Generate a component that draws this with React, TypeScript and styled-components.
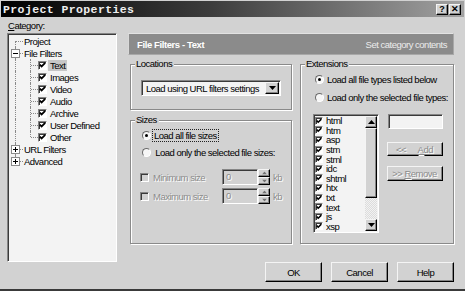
import styled, { createGlobalStyle, css } from 'styled-components';

const BG = '#d2d2d2';
const FIELD = '#f3f3f3';

const GlobalStyle = createGlobalStyle`
  html, body {
    margin: 0;
    padding: 0;
    background: ${BG};
  }
  body {
    width: 465px;
    height: 291px;
    overflow: hidden;
    font-family: "Liberation Sans", Arial, sans-serif;
    font-size: 9.5px;
    letter-spacing: -0.5px;
    color: #000;
  }
`;

const raised = css`
  box-sizing: border-box;
  border: 1px solid;
  border-color: #f4f4f4 #000 #000 #f4f4f4;
  box-shadow: inset -1px -1px #858585;
  background: ${BG};
`;

const sunken = css`
  box-sizing: border-box;
  border: 1px solid;
  border-color: #858585 #fff #fff #858585;
  box-shadow: inset 1px 1px #3a3a3a;
`;

const disabledText = css`
  color: #8c8c8c;
  text-shadow: 1px 1px #fff;
`;

const Window = styled.div`
  box-sizing: border-box;
  width: 465px;
  height: 291px;
  padding: 1px 1px 0 1px;
  background: ${BG};
  display: flex;
  flex-direction: column;
  box-shadow: inset 0 -2px #3a3a3a;
`;

const TitleBar = styled.div`
  height: 16px;
  flex-shrink: 0;
  display: flex;
  align-items: center;
  justify-content: space-between;
  padding: 0 3px 0 2px;
  background: linear-gradient(to right, #000 0%, #3c3c3c 45%, #a2a2a2 100%);
`;

const TitleText = styled.span`
  font-family: "Liberation Mono", "DejaVu Sans Mono", monospace;
  font-weight: bold;
  font-size: 11.5px;
  letter-spacing: 0.4px;
  color: #eeeeee;
`;

const TitleButtons = styled.div`
  display: flex;
  gap: 1px;
`;

const TitleButton = styled.span`
  ${raised};
  width: 12px;
  height: 11px;
  display: flex;
  align-items: center;
  justify-content: center;
  font-weight: bold;
  font-size: 9px;
  letter-spacing: 0;
  line-height: 9px;
`;

const Main = styled.div`
  flex: 1;
  display: flex;
  padding: 3px 10px 0 6px;
`;

const LeftCol = styled.div`
  width: 110px;
  display: flex;
  flex-direction: column;
`;

const CategoryLabel = styled.div`
  height: 13px;
  line-height: 12px;
  padding-left: 1px;
  u {
    text-decoration: underline;
  }
`;

const Tree = styled.div`
  ${sunken};
  height: 229px;
  background: ${FIELD};
  padding-top: 1px;
`;

const TreeRow = styled.div`
  height: 12px;
  display: flex;
  align-items: center;
`;

type Vert = 'full' | 'top' | 'bottom' | 'none';

const Guide = styled.span<{ $v: Vert; $h?: boolean }>`
  position: relative;
  flex-shrink: 0;
  width: 15px;
  height: 12px;
  display: flex;
  align-items: center;
  padding-left: 3px;
  box-sizing: border-box;
  &::before {
    content: '';
    display: ${(p) => (p.$v === 'none' ? 'none' : 'block')};
    position: absolute;
    left: 7px;
    top: ${(p) => (p.$v === 'bottom' ? '6px' : '0')};
    bottom: ${(p) => (p.$v === 'top' ? '6px' : '0')};
    border-left: 1px dotted #8a8a8a;
  }
  &::after {
    content: '';
    display: ${(p) => (p.$h ? 'block' : 'none')};
    position: absolute;
    left: 8px;
    top: 6px;
    width: 7px;
    border-top: 1px dotted #8a8a8a;
  }
`;

const Expander = styled.span<{ $plus?: boolean }>`
  position: relative;
  z-index: 1;
  box-sizing: border-box;
  width: 9px;
  height: 9px;
  border: 1px solid #8a8a8a;
  background: #fff;
  &::before {
    content: '';
    position: absolute;
    left: 1px;
    top: 3px;
    width: 5px;
    height: 1px;
    background: #000;
  }
  &::after {
    content: '';
    display: ${(p) => (p.$plus ? 'block' : 'none')};
    position: absolute;
    left: 3px;
    top: 1px;
    width: 1px;
    height: 5px;
    background: #000;
  }
`;

const TreeLabel = styled.span<{ $selected?: boolean }>`
  height: 11px;
  line-height: 11px;
  padding: 0 2px;
  margin-left: ${(p) => (p.$selected !== undefined ? '1px' : '-1px')};
  background: ${(p) => (p.$selected ? '#c6c6c6' : 'transparent')};
  white-space: nowrap;
`;

const CheckBox = styled.span<{ $size?: number; $disabled?: boolean }>`
  ${sunken};
  flex-shrink: 0;
  width: ${(p) => p.$size ?? 9}px;
  height: ${(p) => p.$size ?? 9}px;
  background: ${(p) => (p.$disabled ? BG : '#fff')};
  display: flex;
  align-items: center;
  justify-content: center;
  svg {
    display: block;
  }
`;

const Check = () => (
  <svg width="7" height="6" viewBox="0 0 7 6">
    <polyline points="0.8,2.6 2.6,4.4 6.2,0.8" fill="none" stroke="#000" strokeWidth="1.8" />
  </svg>
);

const RightCol = styled.div`
  flex: 1;
  margin-left: 11px;
  display: flex;
  flex-direction: column;
  padding-top: 13px;
`;

const Header = styled.div`
  box-sizing: border-box;
  height: 22px;
  display: flex;
  align-items: center;
  justify-content: space-between;
  padding: 0 6px 0 8px;
  background: #8b8b8b;
  border: 1px solid;
  border-color: #e2e2e2 #a8a8a8 #a8a8a8 #d8d8d8;
`;

const HeaderTitle = styled.span`
  font-weight: bold;
  font-size: 9.5px;
  letter-spacing: -0.4px;
  color: #fff;
`;

const HeaderHint = styled.span`
  color: #ececec;
`;

const GroupsRow = styled.div`
  margin: 9px 0 0 2px;
  height: 180px;
  display: flex;
  gap: 8px;
`;

const GroupStack = styled.div`
  width: 162px;
  display: flex;
  flex-direction: column;
  gap: 10px;
`;

const GroupBox = styled.div<{ $h: number; $w?: number; $pad: string }>`
  position: relative;
  box-sizing: border-box;
  height: ${(p) => p.$h}px;
  width: ${(p) => (p.$w ? `${p.$w}px` : 'auto')};
  padding: ${(p) => p.$pad};
  border: 1px solid #8a8a8a;
  box-shadow: inset 1px 1px #fff, 1px 1px #fff;
  display: flex;
  flex-direction: column;
`;

const GroupTitle = styled.span`
  position: absolute;
  top: -7px;
  left: 4px;
  padding: 0 2px 0 1px;
  line-height: 12px;
  background: ${BG};
`;

const Dropdown = styled.div`
  ${sunken};
  height: 16px;
  background: ${FIELD};
  display: flex;
  align-items: center;
  padding: 0 1px 0 4px;
  white-space: nowrap;
`;

const DropButton = styled.span`
  ${raised};
  margin-left: auto;
  width: 14px;
  height: 12px;
  display: flex;
  align-items: center;
  justify-content: center;
`;

const Arrow = ({ up }: { up?: boolean }) => (
  <svg width="7" height="4" viewBox="0 0 7 4" style={{ display: 'block' }}>
    <polygon points={up ? '3.5,0 7,4 0,4' : '0,0 7,0 3.5,4'} fill="#000" />
  </svg>
);

const RadioRow = styled.div<{ $h: number; $gap?: number }>`
  height: ${(p) => p.$h}px;
  display: flex;
  align-items: center;
  gap: ${(p) => p.$gap ?? 2}px;
  white-space: nowrap;
`;

const Radio = styled.span<{ $checked?: boolean }>`
  position: relative;
  box-sizing: border-box;
  flex-shrink: 0;
  width: 9px;
  height: 9px;
  border-radius: 50%;
  border: 1px solid;
  border-color: #6a6a6a #fff #fff #6a6a6a;
  background: #f6f6f6;
  &::after {
    content: '';
    display: ${(p) => (p.$checked ? 'block' : 'none')};
    position: absolute;
    left: 2px;
    top: 2px;
    width: 3px;
    height: 3px;
    border-radius: 50%;
    background: #000;
  }
`;

const FocusText = styled.span`
  outline: 1px dotted #222;
  outline-offset: 0;
  padding: 0 1px;
  line-height: 11px;
`;

const SizeRow = styled.div<{ $top: number }>`
  margin: ${(p) => p.$top}px 0 0 -2px;
  height: 16px;
  display: flex;
  align-items: center;
`;

const SizeLabel = styled.span`
  ${disabledText};
  width: 69px;
  margin-left: 4px;
  white-space: nowrap;
`;

const SizeInput = styled.span`
  ${sunken};
  width: 36px;
  height: 16px;
  background: ${BG};
  padding-left: 3px;
  line-height: 13px;
  ${disabledText};
`;

const Spin = styled.span`
  display: flex;
  flex-direction: column;
  width: 12px;
  height: 16px;
`;

const SpinPart = styled.span`
  ${raised};
  flex: 1;
  display: flex;
  align-items: center;
  justify-content: center;
  svg {
    opacity: 0.45;
    transform: scale(0.7);
  }
`;

const Unit = styled.span`
  ${disabledText};
  margin-left: 3px;
`;

const ListArea = styled.div`
  margin: 10px 0 0 -2px;
  display: flex;
`;

const ListBox = styled.div`
  ${sunken};
  width: 66px;
  height: 119px;
  background: ${FIELD};
  display: flex;
  overflow: hidden;
`;

const ListItems = styled.div`
  flex: 1;
  padding: 1px 0 0 1px;
`;

const ListItem = styled.div`
  height: 9.6px;
  display: flex;
  align-items: center;
  gap: 3px;
  line-height: 9px;
`;

const ScrollBar = styled.div`
  width: 12px;
  display: flex;
  flex-direction: column;
  margin: 1px 1px 1px 0;
`;

const ScrollButton = styled.span`
  ${raised};
  height: 12px;
  flex-shrink: 0;
  display: flex;
  align-items: center;
  justify-content: center;
`;

const Thumb = styled.span`
  ${raised};
  height: 70px;
  flex-shrink: 0;
`;

const Track = styled.span`
  flex: 1;
  background-color: #e6e6e6;
  background-image: repeating-conic-gradient(#f2f2f2 0 25%, #dcdcdc 0 50%);
  background-size: 2px 2px;
`;

const SideCol = styled.div`
  margin-left: 9px;
  width: 55px;
  display: flex;
  flex-direction: column;
`;

const TextField = styled.span`
  ${sunken};
  height: 15px;
  background: ${FIELD};
`;

const SideButton = styled.span<{ $top: number; $h: number; $split?: boolean }>`
  ${raised};
  margin: ${(p) => p.$top}px 0 0 -1px;
  width: 56px;
  height: ${(p) => p.$h}px;
  display: flex;
  align-items: center;
  justify-content: ${(p) => (p.$split ? 'space-between' : 'center')};
  padding: 0 9px 0 8px;
  white-space: nowrap;
  ${disabledText};
  u {
    text-decoration: underline;
  }
`;

const ButtonRow = styled.div`
  margin-top: 18px;
  display: flex;
  justify-content: flex-end;
  gap: 9px;
`;

const Button = styled.button`
  ${raised};
  width: 57px;
  height: 20px;
  padding: 0;
  font: inherit;
  letter-spacing: inherit;
  color: #000;
`;

const sizes = ['Minimum size', 'Maximum size'];
const extensions = ['html', 'htm', 'asp', 'stm', 'stml', 'idc', 'shtml', 'htx', 'txt', 'text', 'js', 'xsp'];
const fileFilters = ['Text', 'Images', 'Video', 'Audio', 'Archive', 'User Defined', 'Other'];

const App = () => {
  return (
    <>
      <GlobalStyle />
      <Window>
        <TitleBar>
          <TitleText>Project Properties</TitleText>
          <TitleButtons>
            <TitleButton>?</TitleButton>
            <TitleButton>✕</TitleButton>
          </TitleButtons>
        </TitleBar>

        <Main>
          <LeftCol>
            <CategoryLabel>
              <u>C</u>ategory:
            </CategoryLabel>
            <Tree>
              <TreeRow>
                <Guide $v='bottom' $h />
                <TreeLabel>Project</TreeLabel>
              </TreeRow>
              <TreeRow>
                <Guide $v='full' $h>
                  <Expander />
                </Guide>
                <TreeLabel>File Filters</TreeLabel>
              </TreeRow>
              {fileFilters.map((name, i) => (
                <TreeRow key={name}>
                  <Guide $v='full' />
                  <Guide $v={i === fileFilters.length - 1 ? 'top' : 'full'} $h />
                  <CheckBox>
                    <Check />
                  </CheckBox>
                  <TreeLabel $selected={i === 0}>{name}</TreeLabel>
                </TreeRow>
              ))}
              <TreeRow>
                <Guide $v='full' $h>
                  <Expander $plus />
                </Guide>
                <TreeLabel>URL Filters</TreeLabel>
              </TreeRow>
              <TreeRow>
                <Guide $v='top' $h>
                  <Expander $plus />
                </Guide>
                <TreeLabel>Advanced</TreeLabel>
              </TreeRow>
            </Tree>
          </LeftCol>

          <RightCol>
            <Header>
              <HeaderTitle>File Filters - Text</HeaderTitle>
              <HeaderHint>Set category contents</HeaderHint>
            </Header>

            <GroupsRow>
              <GroupStack>
                <GroupBox $h={46} $pad='15px 10px 0 10px'>
                  <GroupTitle>Locations</GroupTitle>
                  <Dropdown>
                    <span>Load using URL filters settings</span>
                    <DropButton>
                      <Arrow />
                    </DropButton>
                  </Dropdown>
                </GroupBox>

                <GroupBox $h={124} $pad='6px 0 0 11px'>
                  <GroupTitle>Sizes</GroupTitle>
                  <RadioRow $h={17}>
                    <Radio $checked />
                    <FocusText>Load all file sizes</FocusText>
                  </RadioRow>
                  <RadioRow $h={17}>
                    <Radio />
                    <span>&nbsp;Load only the selected file sizes:</span>
                  </RadioRow>
                  {sizes.map((label, i) => (
                    <SizeRow key={label} $top={i === 0 ? 8 : 3}>
                      <CheckBox $disabled />
                      <SizeLabel>{label}</SizeLabel>
                      <SizeInput>0</SizeInput>
                      <Spin>
                        <SpinPart>
                          <Arrow up />
                        </SpinPart>
                        <SpinPart>
                          <Arrow />
                        </SpinPart>
                      </Spin>
                      <Unit>kb</Unit>
                    </SizeRow>
                  ))}
                </GroupBox>
              </GroupStack>

              <GroupBox $h={180} $w={154} $pad='7px 0 0 14px'>
                <GroupTitle>Extensions</GroupTitle>
                <RadioRow $h={14} $gap={3}>
                  <Radio $checked />
                  <span>Load all file types listed below</span>
                </RadioRow>
                <RadioRow $h={14} $gap={3} style={{ marginTop: 4 }}>
                  <Radio />
                  <span>Load only the selected file types:</span>
                </RadioRow>
                <ListArea>
                  <ListBox>
                    <ListItems>
                      {extensions.map((ext) => (
                        <ListItem key={ext}>
                          <CheckBox $size={8}>
                            <Check />
                          </CheckBox>
                          <span>{ext}</span>
                        </ListItem>
                      ))}
                    </ListItems>
                    <ScrollBar>
                      <ScrollButton>
                        <Arrow up />
                      </ScrollButton>
                      <Thumb />
                      <Track />
                      <ScrollButton>
                        <Arrow />
                      </ScrollButton>
                    </ScrollBar>
                  </ListBox>
                  <SideCol>
                    <TextField />
                    <SideButton $top={13} $h={14} $split>
                      <span>&lt;&lt;</span>
                      <span>
                        <u>A</u>dd
                      </span>
                    </SideButton>
                    <SideButton $top={10} $h={15}>
                      &gt;&gt;&nbsp;<u>R</u>emove
                    </SideButton>
                  </SideCol>
                </ListArea>
              </GroupBox>
            </GroupsRow>

            <ButtonRow>
              <Button>OK</Button>
              <Button>Cancel</Button>
              <Button>Help</Button>
            </ButtonRow>
          </RightCol>
        </Main>
      </Window>
    </>
  );
};

export default App;
